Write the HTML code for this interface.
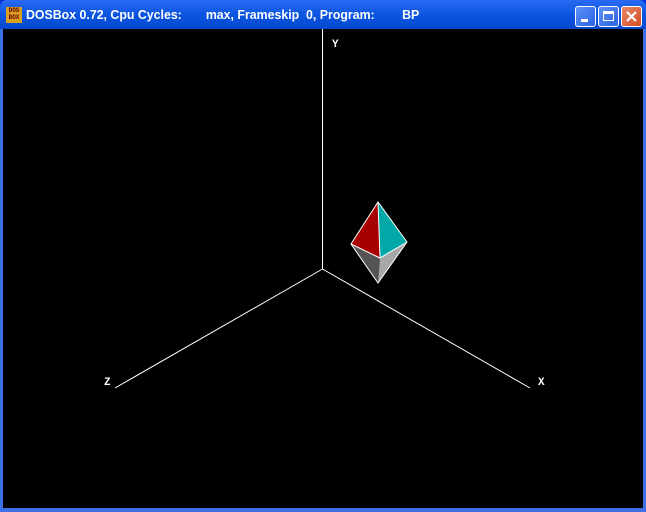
<!DOCTYPE html>
<html><head><style>
body{margin:0;width:646px;height:512px;overflow:hidden;background:#0831d9;font-family:"Liberation Sans",sans-serif}
.win{position:absolute;left:0;top:0;width:646px;height:512px;background:linear-gradient(#2a6af2,#0a55e0 15px,#0648d0 29px);border-radius:7px 7px 0 0}
.frame{position:absolute;left:0;top:29px;width:646px;height:483px;background:#3d6fe6}
.scr{position:absolute;left:3px;top:29px;width:640px;height:479px;background:#000}
.title{position:absolute;left:26px;top:7px;color:#fff;font-size:13px;font-weight:bold;white-space:pre;letter-spacing:0px;transform:scaleX(0.95);transform-origin:left}
.ico{position:absolute;left:6px;top:7px;width:16px;height:16px;background:#d8a020;font:bold 6px "Liberation Mono",monospace;color:#600;line-height:7px;text-align:center}
.btn{position:absolute;top:6px;width:21px;height:21px;border:1px solid #fff;border-radius:3px;box-sizing:border-box;background:linear-gradient(135deg,#5d8ff6,#2c63e8)}
</style></head><body>
<div class="win"></div>
<div class="frame"></div>
<div class="ico">DOS<br>BOX</div>
<div class="title">DOSBox 0.72, Cpu Cycles:       max, Frameskip  0, Program:        BP</div>
<div class="btn" style="left:575px"><div style="position:absolute;left:5px;top:12px;width:7px;height:3px;background:#fff"></div></div>
<div class="btn" style="left:598px"><div style="position:absolute;left:4px;top:4px;width:11px;height:10px;border:1px solid #fff;border-top-width:3px;box-sizing:border-box"></div></div>
<div class="btn" style="left:621px;background:linear-gradient(135deg,#e88a6a,#d34a20)"><svg width="19" height="19" style="position:absolute;left:0;top:0"><path d="M5 5L14 14M14 5L5 14" stroke="#fff" stroke-width="2.2"/></svg></div>
<div class="scr"></div>
<svg width="646" height="512" style="position:absolute;left:0;top:0">
<g stroke="#fff" stroke-width="1" fill="none">
<line x1="322.5" y1="29" x2="322.5" y2="269"/>
<line x1="322.5" y1="269" x2="115" y2="388"/>
<line x1="322.5" y1="269" x2="530" y2="388"/>
</g>
<polygon points="378,202 351,244 380,258" fill="#a80000"/>
<polygon points="378,202 407,242 380,258" fill="#00a8a8"/>
<polygon points="351,244 380,258 378,283" fill="#545454"/>
<polygon points="407,242 380,258 378,283" fill="#a8a8a8"/>
<g stroke="#fff" stroke-width="1" fill="none">
<polygon points="378,202 351,244 378,283 407,242"/>
<polyline points="351,244 380,258 407,242"/>
<line x1="378" y1="202" x2="380" y2="258"/>
</g>
<g fill="#fff" font-family="Liberation Mono,monospace" font-size="11" font-weight="bold">
<text x="332" y="47">Y</text>
<text x="104" y="385">Z</text>
<text x="538" y="385">X</text>
</g>
</svg>
</body></html>
